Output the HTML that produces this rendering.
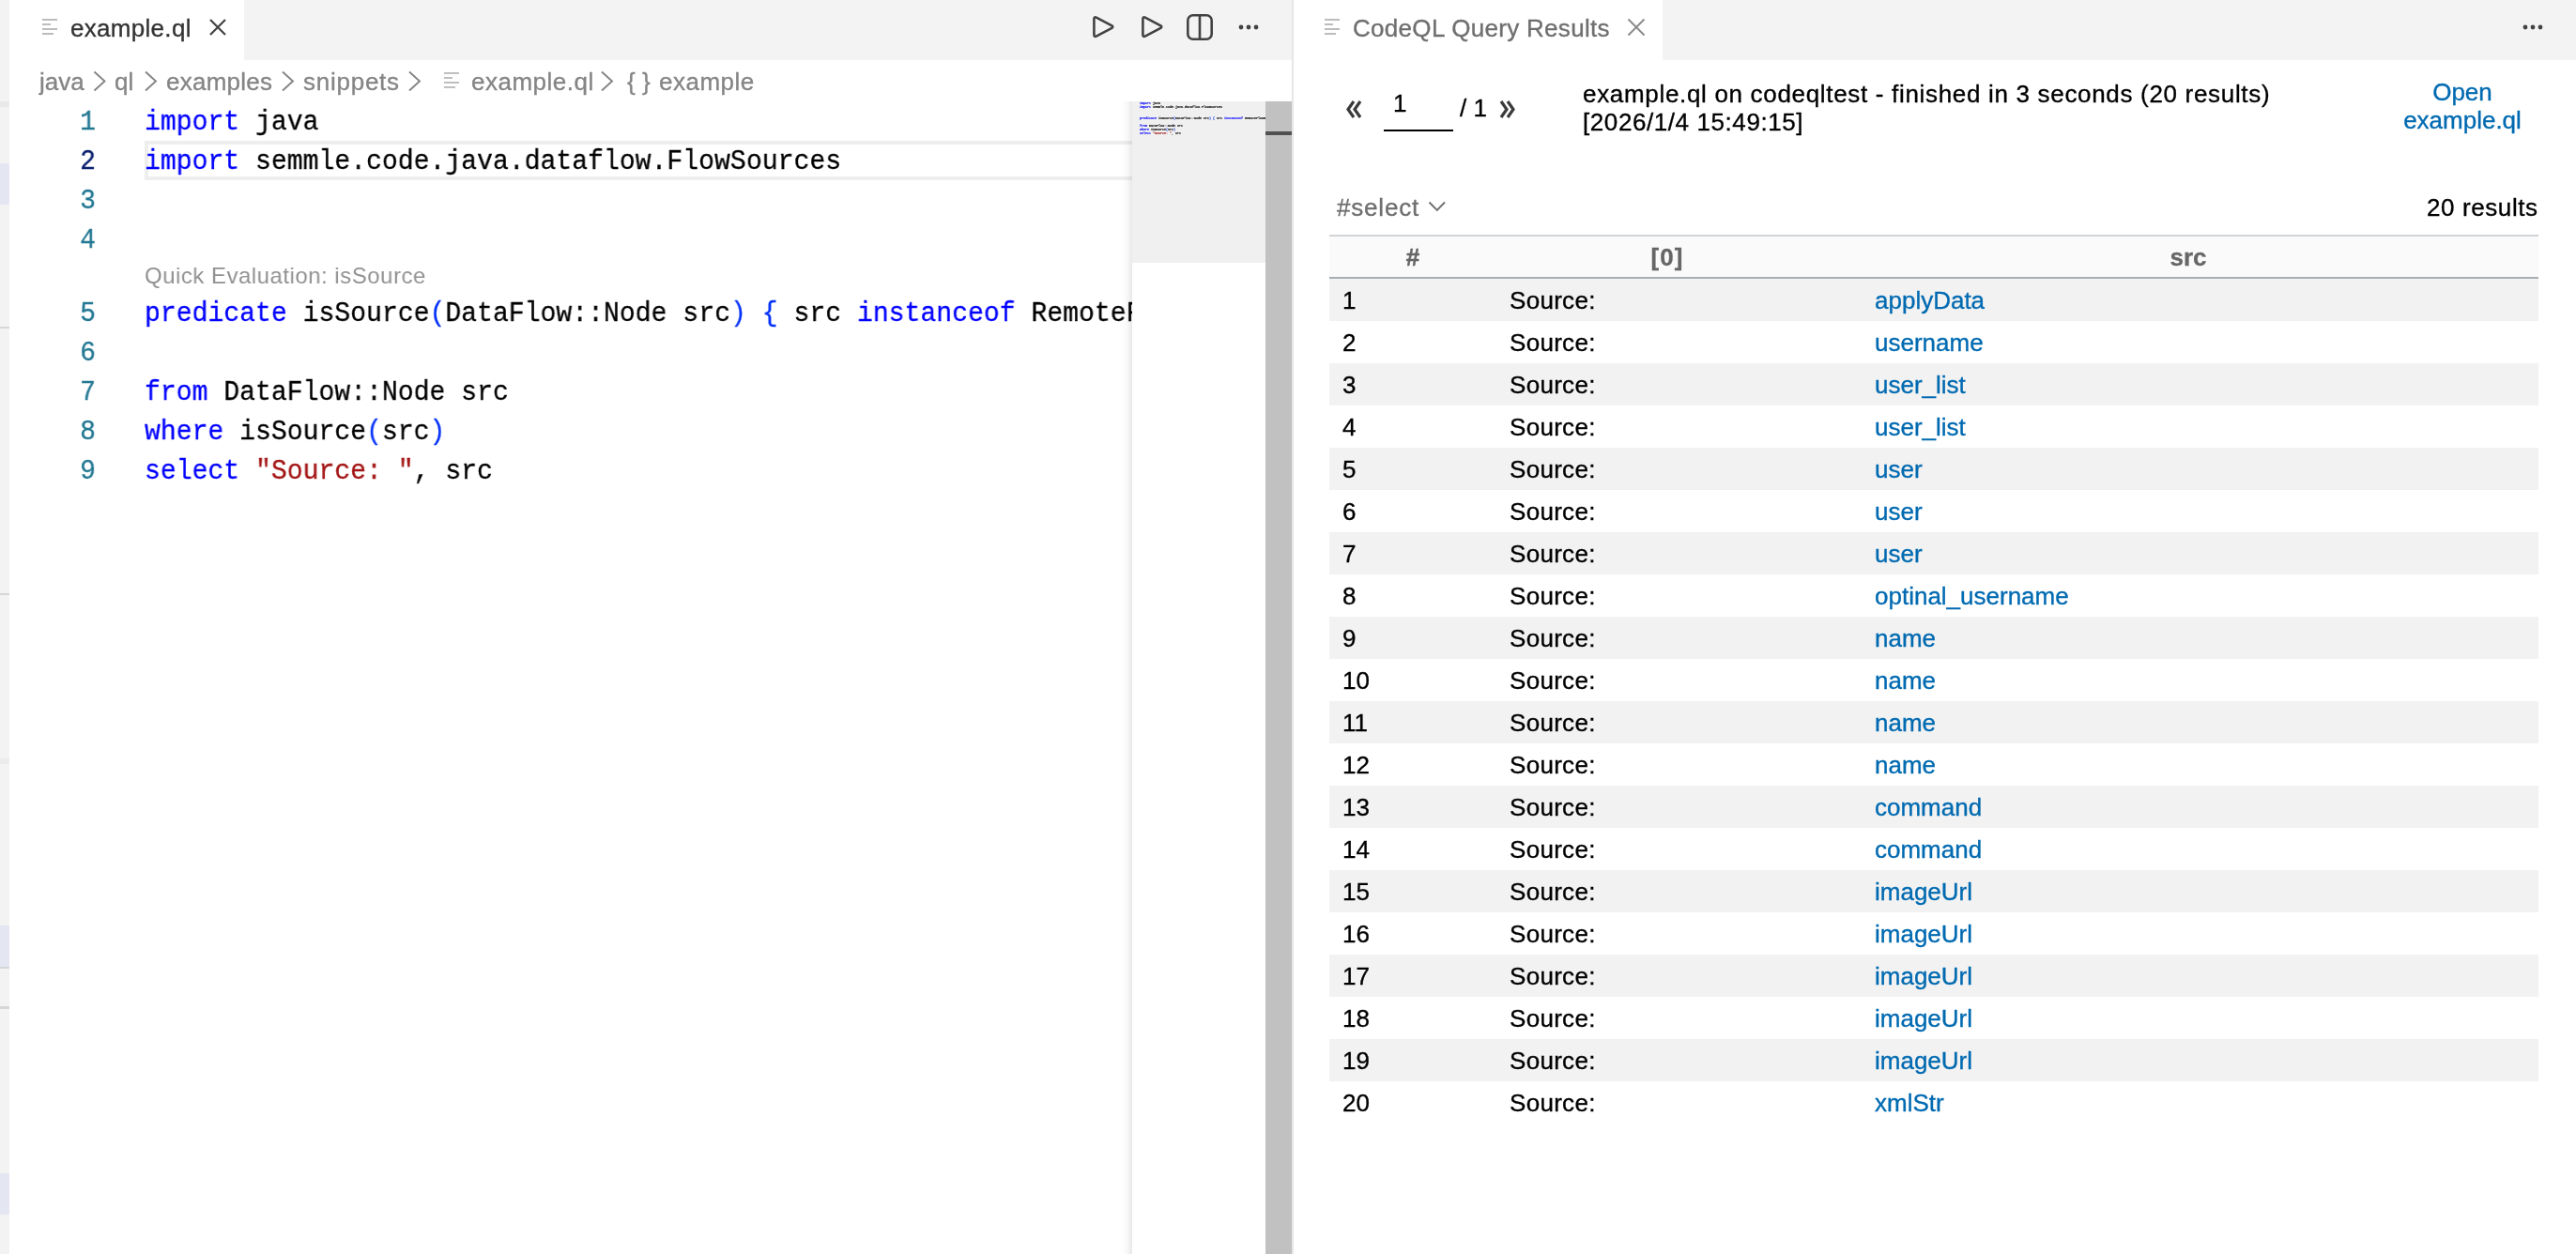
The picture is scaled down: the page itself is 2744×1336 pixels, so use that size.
<!DOCTYPE html>
<html><head><meta charset="utf-8">
<style>
*{margin:0;padding:0;box-sizing:border-box}
html,body{width:2744px;height:1336px;overflow:hidden;background:#fff;position:relative}
body{font-family:"Liberation Sans",sans-serif;font-size:26px;color:#333}
.a{position:absolute}
.t{position:absolute;white-space:pre;line-height:1;-webkit-text-stroke:0.35px currentColor}
.mono{font-family:"Liberation Mono",monospace}
.mono>div{white-space:pre;height:42px}
.mm>div{height:4px!important}
.kw{color:#0000ff}
.br{color:#0431fa}
.str{color:#a31515}
.row{position:relative;height:45px}
.c1{left:14px;top:9.5px;color:#000}
.c2{left:192px;top:9.5px;letter-spacing:0.3px;color:#000}
.c3{left:581px;top:10px;color:#006ab1}
</style></head><body>
<div style="position:absolute;left:0;top:0;width:2744px;height:1336px;will-change:transform">

<!-- left strip (sidebar edge) -->
<div class="a" style="left:0;top:0;width:10px;height:1336px;background:#f3f3f3"></div>
<div class="a" style="left:0;top:108px;width:10px;height:6px;background:#e9e9e9"></div>
<div class="a" style="left:0;top:174px;width:10px;height:44px;background:#e4e6f1"></div>
<div class="a" style="left:0;top:348px;width:10px;height:2px;background:#d6d6d6"></div>
<div class="a" style="left:0;top:632px;width:10px;height:2px;background:#d6d6d6"></div>
<div class="a" style="left:0;top:808px;width:10px;height:6px;background:#ebebeb"></div>
<div class="a" style="left:0;top:986px;width:10px;height:44px;background:#e4e6f1"></div>
<div class="a" style="left:0;top:1030px;width:10px;height:2px;background:#d6d6d6"></div>
<div class="a" style="left:0;top:1072px;width:10px;height:3px;background:#d6d6d6"></div>
<div class="a" style="left:0;top:1250px;width:10px;height:44px;background:#e4e6f1"></div>

<!-- LEFT GROUP -->
<div class="a" style="left:10px;top:0;width:1366px;height:64px;background:#f3f3f3"></div>
<div class="a" style="left:10px;top:0;width:250px;height:64px;background:#fff"></div>
<!-- file icon -->
<div class="a" style="left:45px;top:20px;width:16px;height:2px;background:#bbbcbc"></div>
<div class="a" style="left:45px;top:25px;width:9px;height:2px;background:#bbbcbc"></div>
<div class="a" style="left:45px;top:30px;width:16px;height:2px;background:#bbbcbc"></div>
<div class="a" style="left:45px;top:35px;width:12px;height:2px;background:#bbbcbc"></div>
<div class="t" style="left:75px;top:17px;font-size:26px;letter-spacing:0.3px;color:#333">example.ql</div>
<svg class="a" style="left:221px;top:18px" width="22" height="22" viewBox="0 0 22 22"><path d="M3 3L19 19M19 3L3 19" stroke="#424242" stroke-width="2.2" fill="none"/></svg>

<!-- toolbar icons -->
<svg class="a" style="left:1160px;top:14px" width="30" height="30" viewBox="0 0 30 30"><path d="M5.4 6.2 Q5.4 3.6 7.8 4.6 L24.4 13.4 Q26.2 14.6 24.4 15.8 L7.8 24.6 Q5.4 25.6 5.4 23 Z" stroke="#424242" stroke-width="2.6" fill="none" stroke-linejoin="round"/></svg>
<svg class="a" style="left:1212px;top:14px" width="30" height="30" viewBox="0 0 30 30"><path d="M5.4 6.2 Q5.4 3.6 7.8 4.6 L24.4 13.4 Q26.2 14.6 24.4 15.8 L7.8 24.6 Q5.4 25.6 5.4 23 Z" stroke="#424242" stroke-width="2.6" fill="none" stroke-linejoin="round"/></svg>
<svg class="a" style="left:1262px;top:13px" width="32" height="32" viewBox="0 0 32 32"><rect x="3.3" y="3.3" width="25.4" height="25.4" rx="5.5" stroke="#424242" stroke-width="2.6" fill="none"/><path d="M16 4V28" stroke="#424242" stroke-width="2.6"/></svg>
<svg class="a" style="left:1316px;top:23px" width="28" height="12" viewBox="0 0 28 12"><circle cx="6" cy="6" r="2.4" fill="#424242"/><circle cx="14" cy="6" r="2.4" fill="#424242"/><circle cx="22" cy="6" r="2.4" fill="#424242"/></svg>

<!-- breadcrumbs -->
<div class="t" style="left:42px;top:74px;font-size:26px;color:#858585">java</div>
<div class="t" style="left:122px;top:74px;font-size:26px;color:#858585">ql</div>
<div class="t" style="left:177px;top:74px;font-size:26px;letter-spacing:0.25px;color:#858585">examples</div>
<div class="t" style="left:323px;top:74px;font-size:26px;letter-spacing:0.75px;color:#858585">snippets</div>
<div class="t" style="left:502px;top:74px;font-size:26px;letter-spacing:0.5px;color:#858585">example.ql</div>
<div class="t" style="left:668px;top:74px;font-size:26px;color:#858585">{ }</div>
<div class="t" style="left:702px;top:74px;font-size:26px;letter-spacing:0.5px;color:#858585">example</div>
<svg class="a" style="left:0;top:64px" width="700" height="44" viewBox="0 0 700 44">
 <g stroke="#858585" stroke-width="1.9" fill="none">
  <path d="M100.5 12.5L111.5 22.5L100.5 32.5"/>
  <path d="M155 12.5L166 22.5L155 32.5"/>
  <path d="M301 12.5L312 22.5L301 32.5"/>
  <path d="M436 12.5L447 22.5L436 32.5"/>
  <path d="M641 12.5L652 22.5L641 32.5"/>
 </g>
 <g fill="#bbbcbc">
  <rect x="473" y="13" width="16" height="1.9"/><rect x="473" y="18" width="9" height="1.9"/><rect x="473" y="23" width="16" height="1.9"/><rect x="473" y="28" width="12" height="1.9"/>
 </g>
</svg>

<!-- editor: current line highlight -->
<div class="a" style="left:154px;top:150px;width:1052px;height:42px;border:4px solid #eeeeee;border-right:none"></div>

<!-- line numbers -->
<div class="mono a" style="left:40px;top:109px;width:62px;text-align:right;font-size:30px;line-height:42px;color:#237893;transform:scaleX(0.9367);transform-origin:100% 0;-webkit-text-stroke:0.3px currentColor">
<div>1</div><div style="color:#0b216f">2</div><div>3</div><div>4</div><div style="height:36px"></div><div>5</div><div>6</div><div>7</div><div>8</div><div>9</div>
</div>

<!-- code -->
<div class="a" style="left:154px;top:109px;width:1052px;height:500px;overflow:hidden"><div class="mono a" style="left:0;top:0;width:1124px;font-size:30px;line-height:42px;color:#000;transform:scaleX(0.9367);transform-origin:0 0;-webkit-text-stroke:0.3px currentColor">
<div><span class="kw">import</span> java</div>
<div><span class="kw">import</span> semmle.code.java.dataflow.FlowSources</div>
<div> </div>
<div> </div>
<div style="height:36px;line-height:36px;font-family:'Liberation Sans',sans-serif;font-size:24px;letter-spacing:0.5px;color:#919191;transform:scaleX(1.0676) translateY(-1px);transform-origin:0 0;-webkit-text-stroke:0">Quick Evaluation: isSource</div>
<div><span class="kw">predicate</span> isSource<span class="br">(</span>DataFlow::Node src<span class="br">)</span> <span class="br">{</span> src <span class="kw">instanceof</span> RemoteFlowSource <span class="br">}</span></div>
<div> </div>
<div><span class="kw">from</span> DataFlow::Node src</div>
<div><span class="kw">where</span> isSource<span class="br">(</span>src<span class="br">)</span></div>
<div><span class="kw">select</span> <span class="str">"Source: "</span>, src</div>
</div></div>

<!-- minimap -->
<div class="a" style="left:1194px;top:108px;width:12px;height:1228px;background:linear-gradient(to right,rgba(0,0,0,0),rgba(0,0,0,0.02) 50%,rgba(0,0,0,0.09))"></div>
<div class="a" style="left:1206px;top:108px;width:142px;height:1228px;background:#fff"></div>
<div class="a" style="left:1206px;top:108px;width:142px;height:172px;background:#f0f0f0"></div>
<div class="mono mm a" style="left:1214px;top:108px;width:134px;height:40px;overflow:hidden;font-size:3.34px;line-height:4px;color:#000;font-weight:bold;-webkit-text-stroke:0.08px currentColor">
<div><span class="kw">import</span> java</div>
<div><span class="kw">import</span> semmle.code.java.dataflow.FlowSources</div>
<div> </div>
<div> </div>
<div><span class="kw">predicate</span> isSource<span class="br">(</span>DataFlow::Node src<span class="br">)</span> <span class="br">{</span> src <span class="kw">instanceof</span> RemoteFlowSource <span class="br">}</span></div>
<div> </div>
<div><span class="kw">from</span> DataFlow::Node src</div>
<div><span class="kw">where</span> isSource<span class="br">(</span>src<span class="br">)</span></div>
<div><span class="kw">select</span> <span class="str">"Source: "</span>, src</div>
</div>
<!-- scrollbar -->
<div class="a" style="left:1348px;top:108px;width:28px;height:1228px;background:#c1c1c1"></div>
<div class="a" style="left:1348px;top:140px;width:28px;height:4px;background:#515151"></div>

<!-- divider -->
<div class="a" style="left:1376px;top:0;width:2px;height:1336px;background:#e6e6e6"></div>

<!-- RIGHT GROUP -->
<div class="a" style="left:1378px;top:0;width:1366px;height:64px;background:#f3f3f3"></div>
<div class="a" style="left:1378px;top:0;width:393px;height:64px;background:#fff"></div>
<div class="a" style="left:1411px;top:20px;width:16px;height:2px;background:#bbbcbc"></div>
<div class="a" style="left:1411px;top:25px;width:9px;height:2px;background:#bbbcbc"></div>
<div class="a" style="left:1411px;top:30px;width:16px;height:2px;background:#bbbcbc"></div>
<div class="a" style="left:1411px;top:35px;width:12px;height:2px;background:#bbbcbc"></div>
<div class="t" style="left:1441px;top:17px;font-size:26px;letter-spacing:0.3px;color:#6f6f6f">CodeQL Query Results</div>
<svg class="a" style="left:1732px;top:18px" width="22" height="22" viewBox="0 0 22 22"><path d="M2.5 2.5L19.5 19.5M19.5 2.5L2.5 19.5" stroke="#8a8a8a" stroke-width="1.9" fill="none"/></svg>
<svg class="a" style="left:2684px;top:23px" width="28" height="12" viewBox="0 0 28 12"><circle cx="6" cy="6" r="2.4" fill="#424242"/><circle cx="14" cy="6" r="2.4" fill="#424242"/><circle cx="22" cy="6" r="2.4" fill="#424242"/></svg>

<!-- results header -->
<svg class="a" style="left:1433px;top:104px" width="24" height="24" viewBox="0 0 24 24"><path d="M9 4L3 12.5L9 21M16 4L10 12.5L16 21" stroke="#3b3b3b" stroke-width="3.2" fill="none"/></svg>
<svg class="a" style="left:1594px;top:104px" width="24" height="24" viewBox="0 0 24 24"><path d="M5 4L11 12.5L5 21M12 4L18 12.5L12 21" stroke="#3b3b3b" stroke-width="3.2" fill="none"/></svg>
<div class="t" style="left:1484px;top:97px;font-size:26px;color:#000">1</div>
<div class="a" style="left:1474px;top:137.5px;width:74px;height:2.5px;background:#000"></div>
<div class="t" style="left:1555px;top:101.5px;font-size:26px;color:#000">/ 1</div>
<div class="t" style="left:1686px;top:84.5px;font-size:26px;line-height:30px;color:#000"><span style="letter-spacing:0.68px">example.ql on codeqltest - finished in 3 seconds (20 results)</span>
<span style="letter-spacing:0.58px">[2026/1/4 15:49:15]</span></div>
<div class="t" style="left:2538px;top:83.3px;width:170px;text-align:center;font-size:26px;line-height:30px;color:#006ab1">Open
example.ql</div>

<div class="t" style="left:1424px;top:208px;font-size:26px;letter-spacing:0.8px;color:#6f6f6f">#select</div>
<svg class="a" style="left:1520px;top:212px" width="22" height="16" viewBox="0 0 22 16"><path d="M2.5 3.5L10.8 12L19 3.5" stroke="#6f6f6f" stroke-width="1.9" fill="none"/></svg>
<div class="t" style="left:2585px;top:207.5px;font-size:26px;letter-spacing:0.6px;color:#000">20 results</div>

<!-- table -->
<div class="a" style="left:1416px;top:250px;width:1288px;height:2px;background:#d2d5d8"></div>
<div class="a" style="left:1416px;top:252px;width:1288px;height:43px;background:#fafafa"></div>
<div class="a" style="left:1416px;top:295px;width:1288px;height:2px;background:#a9aeb3"></div>
<div class="t" style="left:1416px;top:260.5px;width:178px;text-align:center;font-size:26px;font-weight:bold;color:#666;-webkit-text-stroke:0.5px currentColor">#</div>
<div class="t" style="left:1594px;top:260.5px;width:364px;text-align:center;font-size:26px;font-weight:bold;letter-spacing:1px;color:#666;-webkit-text-stroke:0.3px currentColor">[0]</div>
<div class="t" style="left:1958px;top:261px;width:746px;text-align:center;font-size:26px;font-weight:bold;color:#666;-webkit-text-stroke:0.3px currentColor">src</div>
<div class="a" style="left:1416px;top:297px;width:1288px">
<div class="row" style="background:#f2f2f2"><div class="t c1">1</div><div class="t c2">Source:</div><div class="t c3">applyData</div></div>
<div class="row" style="background:#fff"><div class="t c1">2</div><div class="t c2">Source:</div><div class="t c3">username</div></div>
<div class="row" style="background:#f2f2f2"><div class="t c1">3</div><div class="t c2">Source:</div><div class="t c3">user_list</div></div>
<div class="row" style="background:#fff"><div class="t c1">4</div><div class="t c2">Source:</div><div class="t c3">user_list</div></div>
<div class="row" style="background:#f2f2f2"><div class="t c1">5</div><div class="t c2">Source:</div><div class="t c3">user</div></div>
<div class="row" style="background:#fff"><div class="t c1">6</div><div class="t c2">Source:</div><div class="t c3">user</div></div>
<div class="row" style="background:#f2f2f2"><div class="t c1">7</div><div class="t c2">Source:</div><div class="t c3">user</div></div>
<div class="row" style="background:#fff"><div class="t c1">8</div><div class="t c2">Source:</div><div class="t c3">optinal_username</div></div>
<div class="row" style="background:#f2f2f2"><div class="t c1">9</div><div class="t c2">Source:</div><div class="t c3">name</div></div>
<div class="row" style="background:#fff"><div class="t c1">10</div><div class="t c2">Source:</div><div class="t c3">name</div></div>
<div class="row" style="background:#f2f2f2"><div class="t c1">11</div><div class="t c2">Source:</div><div class="t c3">name</div></div>
<div class="row" style="background:#fff"><div class="t c1">12</div><div class="t c2">Source:</div><div class="t c3">name</div></div>
<div class="row" style="background:#f2f2f2"><div class="t c1">13</div><div class="t c2">Source:</div><div class="t c3">command</div></div>
<div class="row" style="background:#fff"><div class="t c1">14</div><div class="t c2">Source:</div><div class="t c3">command</div></div>
<div class="row" style="background:#f2f2f2"><div class="t c1">15</div><div class="t c2">Source:</div><div class="t c3">imageUrl</div></div>
<div class="row" style="background:#fff"><div class="t c1">16</div><div class="t c2">Source:</div><div class="t c3">imageUrl</div></div>
<div class="row" style="background:#f2f2f2"><div class="t c1">17</div><div class="t c2">Source:</div><div class="t c3">imageUrl</div></div>
<div class="row" style="background:#fff"><div class="t c1">18</div><div class="t c2">Source:</div><div class="t c3">imageUrl</div></div>
<div class="row" style="background:#f2f2f2"><div class="t c1">19</div><div class="t c2">Source:</div><div class="t c3">imageUrl</div></div>
<div class="row" style="background:#fff"><div class="t c1">20</div><div class="t c2">Source:</div><div class="t c3">xmlStr</div></div>
</div>
</div>
</body></html>
